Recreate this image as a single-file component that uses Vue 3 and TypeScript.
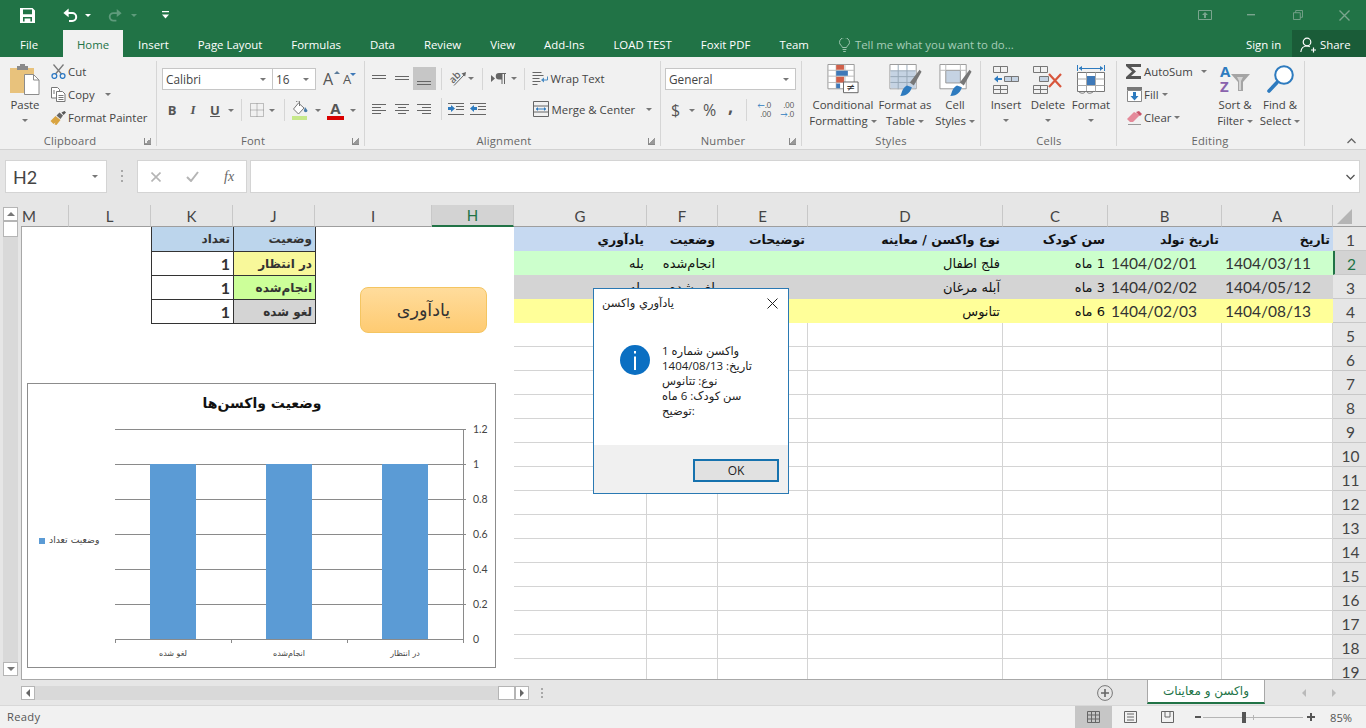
<script setup lang="ts">
const letters = ['M', 'L', 'K', 'J', 'I', 'H', 'G', 'F', 'E', 'D', 'C', 'B', 'A']
const content: Record<number, string[]> = {
  1: ['', '', 'تعداد', 'وضعیت', '', '', 'یادآوري', 'وضعیت', 'توضیحات', 'نوع واکسن / معاینه', 'سن کودک', 'تاریخ تولد', 'تاریخ'],
  2: ['', '', '1', 'در انتظار', '', '', 'بله', 'انجام‌شده', '', 'فلج اطفال', '1 ماه', '1404/02/01', '1404/03/11'],
  3: ['', '', '1', 'انجام‌شده', '', '', 'بله', 'لغو شده', '', 'آبله مرغان', '3 ماه', '1404/02/02', '1404/05/12'],
  4: ['', '', '1', 'لغو شده', '', '', 'بله', 'در انتظار', '', 'تتانوس', '6 ماه', '1404/02/03', '1404/08/13']
}
const rowNums = Array.from({ length: 19 }, (_, i) => i + 1)
const tabs = ['Insert', 'Page Layout', 'Formulas', 'Data', 'Review', 'View', 'Add-Ins', 'LOAD TEST', 'Foxit PDF', 'Team']

function cellText(r: number, c: number): string {
  return content[r]?.[c] ?? ''
}
function cellClass(r: number, c: number): string[] {
  const out: string[] = []
  if (c === 0) out.push('edge')
  if (c >= 6) {
    if (r === 1) out.push('head', 'f-blue')
    else if (r === 2) out.push('f-green')
    else if (r === 3) out.push('f-grey')
    else if (r === 4) out.push('f-yellow')
    else out.push('lined')
    if (r <= 4 && c >= 11 && r > 1) out.push('date')
    if (r > 1 && r <= 4) out.push('ar')
  }
  if ((c === 2 || c === 3) && r <= 4) {
    out.push('tbl')
    if (r === 1) out.push('t-blue', 'kh')
    if (c === 2 && r > 1) out.push('num')
    if (c === 3 && r === 2) out.push('t-yellow', 'kv')
    if (c === 3 && r === 3) out.push('t-lime', 'kv')
    if (c === 3 && r === 4) out.push('t-grey', 'kv')
  }
  return out
}
const gridY = [429, 464, 499, 534, 569, 604]
const axisLabels = ['1.2', '1', '0.8', '0.6', '0.4', '0.2', '0']
const bars = [150, 266, 382]
const cats = [
  { x: 173, t: 'لغو شده' },
  { x: 289, t: 'انجام‌شده' },
  { x: 405, t: 'در انتظار' }
]
const ticks = [115, 231, 347, 463]
</script>

<template>
  <div class="app">
    <header class="titlebar">
      <div class="qat">
        <svg class="q-save" width="15" height="15" viewBox="0 0 15 15"><path fill="#fff" fill-rule="evenodd" d="M0 0h12.5L15 2.500V15H0zM3 1.600v4.600h9V1.600zM3 9v4.400h1.600v-3h5.800v3H12V9z"/></svg>
        <svg class="q-undo" width="15" height="14" viewBox="0 0 15 14"><path fill="none" stroke="#fff" stroke-width="2" d="M2 5h7.200a4 4 0 0 1 0 8H6"/><path fill="#fff" d="M5.600 0.600v8.600L0.400 5z"/></svg>
        <i class="caret white c-undo"></i>
        <svg class="q-redo" width="14" height="14" viewBox="0 0 15 14"><path fill="none" stroke="#5f9b7c" stroke-width="2" d="M13 5H5.800a4 4 0 0 0 0 8H9"/><path fill="#5f9b7c" d="M9.400 0.600v8.600L14.600 5z"/></svg>
        <i class="caret dim c-redo"></i>
        <svg class="q-more" width="7" height="8" viewBox="0 0 7 8"><path fill="#fff" d="M0 0h7v1.300H0zM0 3.400h7L3.500 7.600z"/></svg>
        <div class="win">
          <svg width="14" height="10" viewBox="0 0 14 10"><path fill="none" stroke="#7aa58e" d="M.5.500h13v9H.5z"/><path fill="#7aa58e" d="M7 2l3 3H8v3H6V5H4z"/></svg>
          <svg class="w-min" width="8" height="2" viewBox="0 0 8 2"><path fill="#7aa58e" d="M0 0h8v1.400H0z"/></svg>
          <svg class="w-max" width="10" height="10" viewBox="0 0 11 11"><path fill="none" stroke="#7aa58e" d="M.5 3h7.500v7.500H.5zM3 3V.5h7.500V8H8"/></svg>
          <svg class="w-x" width="11" height="11" viewBox="0 0 11 11"><path stroke="#7aa58e" stroke-width="1.400" d="M.5.500l10 10M10.500.5l-10 10"/></svg>
        </div>
      </div>
      <nav class="tabs">
        <span class="tab file">File</span>
        <span class="tab home">Home</span>
        <span v-for="t in tabs" :key="t" class="tab">{{ t }}</span>
        <span class="tell">
          <svg width="11" height="14" viewBox="0 0 11 14"><path fill="none" stroke="#9cc4ae" d="M3.400 9.500C3 7.500.5 6.800.5 4.500a5 5 0 0 1 10 0c0 2.300-2.500 3-2.900 5zM3.600 11.500h3.800M4.200 13.500h2.600"/></svg>
          Tell me what you want to do...
        </span>
        <span class="signin">Sign in</span>
        <span class="share">
          <svg width="16" height="16" viewBox="0 0 16 16"><circle cx="7" cy="5" r="3.800" fill="none" stroke="#fff" stroke-width="1.200"/><path fill="none" stroke="#fff" stroke-width="1.200" d="M.8 15c.4-3.800 2.800-6 6.200-6 1 0 2 .2 2.800.6M11 13h5M13.500 10.500v5"/></svg>
          Share
        </span>
      </nav>
    </header>

    <section class="ribbon">
      <div class="group g-clip">
        <div class="body">
          <div class="big paste">
            <svg width="30" height="31" viewBox="0 0 30 31">
              <path fill="#e8c27c" d="M0 4h24v25H0z"/>
              <path fill="#8a8a8a" d="M7 2h3V0h5v2h3v4H7z"/>
              <path fill="#fff" stroke="#8c8c8c" d="M14.500 10.500h9l5.500 5.500v14.500H14.500z"/>
              <path fill="none" stroke="#8c8c8c" d="M23.500 10.500V16H29"/>
            </svg>
            <span class="lbl paste-l">Paste</span>
            <i class="caret"></i>
          </div>
          <div class="rows">
            <div class="row">
              <svg width="15" height="15" viewBox="0 0 15 15"><path fill="none" stroke="#7a7a7a" stroke-width="1.300" d="M2.500.5l8 9.500M12.500.5l-8 9.500"/><circle cx="3.400" cy="12" r="2.400" fill="none" stroke="#2b78c4" stroke-width="1.300"/><circle cx="11.600" cy="12" r="2.400" fill="none" stroke="#2b78c4" stroke-width="1.300"/></svg>
              <span>Cut</span>
            </div>
            <div class="row">
              <svg width="15" height="15" viewBox="0 0 15 15"><path fill="#fff" stroke="#777" d="M.5.500h6l2 2v8.500h-8z"/><path fill="#fff" stroke="#777" d="M5.500 4.500h6l2.500 2.500v7.500H5.500z"/><path stroke="#777" d="M7.500 8.500h5M7.500 10.500h5M7.500 12.500h5M2 4h2M2 6h2"/></svg>
              <span>Copy</span><i class="caret c-copy"></i>
            </div>
            <div class="row">
              <svg width="16" height="14" viewBox="0 0 16 14"><path fill="#d9a441" d="M0 10l5-5 5 4-4 5-2-.5 1-2-2 1.500z"/><path fill="#666" d="M6 4.500l3-3 3.500 3-2.500 3.500z"/><path fill="#555" d="M11 1.500l3-1.500 1.500 1.500-2.500 2.500z"/></svg>
              <span>Format Painter</span>
            </div>
          </div>
        </div>
        <div class="glabel"><span class="gl-t lt-clip">Clipboard</span><i class="launch"></i></div>
      </div>

      <div class="group g-font">
        <div class="body col">
          <div class="line l1">
            <span class="combo c-font">Calibri<i class="caret"></i></span>
            <span class="combo c-size">16<i class="caret"></i></span>
            <span class="grow">A<i class="up"></i></span>
            <span class="shrink">A<i class="down"></i></span>
          </div>
          <div class="line l2">
            <b class="fmt f-b">B</b>
            <i class="fmt f-i">I</i>
            <u class="fmt f-u">U</u>
            <i class="caret m-u"></i>
            <span class="sep s-f1"></span>
            <svg class="ic-border" width="14" height="14" viewBox="0 0 14 14"><path fill="none" stroke="#888" stroke-dasharray="1 1" d="M.5.500h13v13H.5zM7 .5v13M.5 7h13"/></svg>
            <i class="caret m-b"></i>
            <span class="sep s-f2"></span>
            <svg class="ic-fill" width="17" height="19" viewBox="0 0 17 19"><path fill="#fff" stroke="#777" d="M1.500 8l5-6 5.500 5-5.500 6z"/><path fill="none" stroke="#777" d="M4.500 1a1.500 1.500 0 0 1 3 0v4"/><path fill="#4a7ca8" d="M13 6l2.500 3.500a1.800 1.800 0 1 1-3.600 0z"/><path fill="#c6e88a" d="M0 15h15v4H0z"/></svg>
            <i class="caret m-f"></i>
            <span class="fcolor">A<em></em></span>
            <i class="caret m-c"></i>
          </div>
        </div>
        <div class="glabel"><span class="gl-t lt-font">Font</span><i class="launch"></i></div>
      </div>

      <div class="group g-align">
        <div class="body col">
          <div class="line a1">
            <span class="ib"><svg width="14" height="8" viewBox="0 0 14 8"><path stroke="#666" d="M0 .5h14M0 3.500h14"/></svg></span>
            <span class="ib"><svg width="14" height="8" viewBox="0 0 14 8"><path stroke="#666" d="M0 1.500h14M0 4.500h14"/></svg></span>
            <span class="ib on"><svg width="14" height="16" viewBox="0 0 14 16"><path stroke="#666" d="M0 10.500h14M0 13.500h14"/></svg></span>
            <span class="sep s-a1"></span>
            <svg class="ic-or" width="16" height="16" viewBox="0 0 16 16"><text x="0" y="10" transform="rotate(-45 5 8)" class="or-t">ab</text><path stroke="#666" d="M4 14.500L14 4"/><path fill="#666" d="M16 1l-.8 4.500L11.500 2.500z"/></svg>
            <i class="caret m-or"></i>
            <span class="sep s-a2"></span>
            <span class="rtl"><svg width="15" height="11" viewBox="0 0 15 11"><path fill="#666" d="M0 2l4 3.500L0 9zM8 0h7v1h-1v10h-1V1h-1.500v10h-1V6.500H8a3.200 3.200 0 0 1 0-6.500z"/></svg></span>
            <i class="caret m-rt"></i>
            <span class="sep s-a3"></span>
            <span class="wtxt">
              <svg width="16" height="16" viewBox="0 0 16 16"><path fill="none" stroke="#666" d="M.5 1.500h9M.5 4.500h11M.5 7.500h7M.5 10.500h8M.5 13.500h5"/><path fill="none" stroke="#4a8cc4" d="M15.500 5.500V9H11"/><path fill="#4a8cc4" d="M12 6.500v5L9 9z"/></svg>
              Wrap Text
            </span>
          </div>
          <div class="line a2">
            <span class="ib"><svg width="14" height="10" viewBox="0 0 14 10"><path stroke="#666" d="M0 .5h14M0 3.500h9M0 6.500h14M0 9.500h9"/></svg></span>
            <span class="ib"><svg width="14" height="10" viewBox="0 0 14 10"><path stroke="#666" d="M0 .5h14M3 3.500h8M0 6.500h14M3 9.500h8"/></svg></span>
            <span class="ib"><svg width="14" height="10" viewBox="0 0 14 10"><path stroke="#666" d="M0 .5h14M5 3.500h9M0 6.500h14M5 9.500h9"/></svg></span>
            <span class="sep s-a4"></span>
            <svg class="ic-ind" width="16" height="12" viewBox="0 0 16 12"><path stroke="#666" d="M0 .5h16M8 3.500h8M8 6.500h8M0 11.500h16"/><path fill="#2e7bbf" d="M0 4h3V2l4 3.500L3 9V7H0z"/></svg>
            <svg class="ic-out" width="16" height="12" viewBox="0 0 16 12"><path stroke="#666" d="M0 .5h16M8 3.500h8M8 6.500h8M0 11.500h16"/><path fill="#2e7bbf" d="M7 4H4V2L0 5.500 4 9V7h3z"/></svg>
            <span class="wtxt merge">
              <svg width="16" height="16" viewBox="0 0 16 16"><path fill="none" stroke="#666" d="M.5.500h15v15H.5zM.5 5h15M.5 11h15"/><path fill="none" stroke="#2e7bbf" d="M3 8h10"/><path fill="#2e7bbf" d="M3 8l2-2v4zM13 8l-2-2v4z"/></svg>
              Merge &amp; Center
            </span>
            <i class="caret m-mg"></i>
          </div>
        </div>
        <div class="glabel"><span class="gl-t lt-align">Alignment</span><i class="launch"></i></div>
      </div>

      <div class="group g-num">
        <div class="body col">
          <div class="line n1"><span class="combo c-num">General<i class="caret"></i></span></div>
          <div class="line n2">
            <span class="sym s-d">$</span><i class="caret m-d"></i>
            <span class="sym s-p">%</span>
            <span class="sym s-c">,</span>
            <span class="sep s-n"></span>
            <span class="dec d1"><em><b>←</b>.0</em><em>.00</em></span>
            <span class="dec d2"><em>.00</em><em><b>→</b>.0</em></span>
          </div>
        </div>
        <div class="glabel"><span class="gl-t lt-num">Number</span><i class="launch"></i></div>
      </div>

      <div class="group g-styles">
        <div class="body bigs">
          <div class="big w-cf">
            <svg width="32" height="36" viewBox="0 0 32 36">
              <path fill="#fff" stroke="#999" d="M.5.500h27v25H.5z"/>
              <path stroke="#bbb" d="M9 .5v25M18 .5v25M.5 6.500h27M.5 12.500h27M.5 19h27"/>
              <path fill="#d0604a" d="M9 1h8v5H9zM9 13h8v6H9z"/><path fill="#3f79b8" d="M9 7h12v5H9zM9 20h4v5H9z"/>
              <path fill="#fff" stroke="#666" d="M16.500 18.500h15v11h-15z"/>
              <text x="24" y="28" class="ne">≠</text>
            </svg>
            <span class="lbl">Conditional</span>
            <span class="lbl">Formatting<i class="caret c-in"></i></span>
          </div>
          <div class="big w-ft">
            <svg width="33" height="36" viewBox="0 0 33 36">
              <path fill="#fff" stroke="#999" d="M.5.500h27v25H.5z"/>
              <path fill="#c5d3e3" d="M1 7h26v18H1z"/>
              <path stroke="#98a8b8" d="M9 1v25M18 1v25M1 7h26M1 13h26M1 19h26"/>
              <path fill="#777" d="M21 19l10-13 2 2-8 14z"/>
              <path fill="#2e7bbf" d="M11 33c2-2 1-8 7-11l5 2c-1 4-4 9-12 9z"/>
            </svg>
            <span class="lbl">Format as</span>
            <span class="lbl">Table<i class="caret c-in"></i></span>
          </div>
          <div class="big w-cs">
            <svg width="33" height="36" viewBox="0 0 33 36">
              <path fill="#fff" stroke="#999" d="M.5.500h27v25H.5z"/>
              <path fill="#c5d3e3" stroke="#999" d="M6.500 6.500h15v13h-15z"/>
              <path stroke="#bbb" d="M.5 6.500h6M21.500 6.500h6M6.500 .5v6M21.500 .5v6"/>
              <path fill="#777" d="M21 19l10-13 2 2-8 14z"/>
              <path fill="#2e7bbf" d="M11 33c2-2 1-8 7-11l5 2c-1 4-4 9-12 9z"/>
            </svg>
            <span class="lbl">Cell</span>
            <span class="lbl">Styles<i class="caret c-in"></i></span>
          </div>
        </div>
        <div class="glabel"><span class="gl-t lt-styles">Styles</span></div>
      </div>

      <div class="group g-cells">
        <div class="body bigs">
          <div class="big w-in">
            <svg width="26" height="28" viewBox="0 0 26 28">
              <path fill="none" stroke="#777" d="M.5.500h14v6H.5zM7.500.5v6M.5 19.500h14v8H.5zM7.500 19.500v8M.5 23.500h14"/>
              <path fill="#c5d3e3" stroke="#777" d="M11.500 10.500h14v5h-14zM18.500 10.500v5"/>
              <path fill="#2e7bbf" d="M1 13l4-3.500V12h4v2H5v2.500z"/>
            </svg>
            <span class="lbl">Insert</span><i class="caret"></i>
          </div>
          <div class="big w-del">
            <svg width="30" height="28" viewBox="0 0 30 28">
              <path fill="none" stroke="#777" d="M.5.500h14v6H.5zM7.500.5v6M.5 19.500h14v8H.5zM7.500 19.500v8M.5 23.500h14"/>
              <path fill="#c5d3e3" stroke="#777" d="M6.500 10.500h9v5h-9z"/>
              <path stroke="#d8563c" stroke-width="2.200" d="M16 8l12 13M28 8L16 21"/>
            </svg>
            <span class="lbl">Delete</span><i class="caret"></i>
          </div>
          <div class="big w-fmt">
            <svg width="28" height="30" viewBox="0 0 28 30">
              <path fill="#2e7bbf" d="M0 0h1v6H0zM27 0h1v6h-1zM2 3h24v1H2z"/>
              <path fill="#2e7bbf" d="M2 3l3-2v5zM26 3l-3-2v5z"/>
              <path fill="#fff" stroke="#777" d="M.5 7.500h27v19H.5z"/>
              <path stroke="#aaa" d="M9.500 7.500v19M18.500 7.500v19M.5 14h27M.5 20.500h27"/>
              <path fill="#3f79b8" d="M10 11h8v9h-8z"/>
              <path fill="none" stroke="#777" d="M1 26c3 3 6 3 8 0 2 3 5 3 8 0"/>
            </svg>
            <span class="lbl">Format</span><i class="caret"></i>
          </div>
        </div>
        <div class="glabel"><span class="gl-t lt-cells">Cells</span></div>
      </div>

      <div class="group g-edit">
        <div class="body">
          <div class="rows e-rows">
            <div class="row">
              <svg width="17" height="15" viewBox="0 0 17 15"><path fill="#555" d="M0 0h15v3H5l5 4.500L5 12h10v3H0v-2l6-5.500L0 2z"/></svg>
              <span>AutoSum</span><i class="caret c-as"></i>
            </div>
            <div class="row">
              <svg width="15" height="15" viewBox="0 0 15 15"><path fill="#777" d="M0 0h15v3H0z"/><path fill="#fff" stroke="#888" d="M.5 3.500h14v11H.5z"/><path fill="#2e7bbf" d="M6 5h3v4h2.500l-4 4.500L3.500 9H6z"/></svg>
              <span>Fill</span><i class="caret c-fl"></i>
            </div>
            <div class="row">
              <svg width="15" height="14" viewBox="0 0 15 14"><path fill="#e58a9a" d="M0 8l7-7 6 3-7 7H3z"/><path fill="#c9566a" d="M9 1l3-1 3 3-2 2z"/><path stroke="#999" d="M1 13.500h13"/></svg>
              <span>Clear</span><i class="caret c-fl"></i>
            </div>
          </div>
          <div class="big w-sort">
            <svg width="32" height="28" viewBox="0 0 32 28">
              <text x="1" y="12" class="az a">A</text>
              <text x="1" y="27" class="az z">Z</text>
              <path fill="#a5a5a5" d="M12 9h19l-7 8v9h-5v-9z"/>
              <path fill="#d4d4d4" d="M18 12h6l-2 4v9h-2v-9z"/>
            </svg>
            <span class="lbl">Sort &amp;</span>
            <span class="lbl">Filter<i class="caret c-in"></i></span>
          </div>
          <div class="big w-find">
            <svg width="28" height="28" viewBox="0 0 28 28">
              <circle cx="18" cy="10" r="8.800" fill="#fff" stroke="#2e7bbf" stroke-width="2"/>
              <path stroke="#2e7bbf" stroke-width="3.600" stroke-linecap="round" d="M11 17.500l-8 8.500"/>
            </svg>
            <span class="lbl">Find &amp;</span>
            <span class="lbl">Select<i class="caret c-in"></i></span>
          </div>
        </div>
        <div class="glabel"><span class="gl-t lt-edit">Editing</span></div>
      </div>

      <div class="collapse">
        <svg width="9" height="6" viewBox="0 0 9 6"><path fill="none" stroke="#666" stroke-width="1.300" d="M.5 5l4-4 4 4"/></svg>
      </div>
    </section>

    <section class="fbar">
      <div class="namebox">H2<i class="caret"></i></div>
      <div class="dots"><i></i><i></i><i></i></div>
      <div class="fnbox">
        <svg width="10" height="10" viewBox="0 0 10 10"><path stroke="#b5b5b5" stroke-width="1.600" d="M.5.500l9 9M9.500.5l-9 9"/></svg>
        <svg width="13" height="11" viewBox="0 0 13 11"><path fill="none" stroke="#b5b5b5" stroke-width="2" d="M1 6l4 4 7-9"/></svg>
        <em>fx</em>
      </div>
      <div class="finput">
        <svg width="9" height="6" viewBox="0 0 9 6"><path fill="none" stroke="#555" stroke-width="1.300" d="M.5 1l4 4 4-4"/></svg>
      </div>
    </section>

    <section class="sheet">
      <div class="vscroll">
        <span class="vbtn"><i class="tri-up"></i></span>
        <span class="vthumb"></span>
        <span class="vtrack"></span>
        <span class="vbtn"><i class="tri-down"></i></span>
      </div>
      <div class="gridwrap">
        <div class="grid">
          <div v-for="l in letters" :key="l" class="ch" :class="{ sel: l === 'H', first: l === 'M' }">{{ l }}</div>
          <div class="corner"><i></i></div>
          <template v-for="r in rowNums" :key="r">
            <div v-for="(l, c) in letters" :key="l + r" class="cell" :class="cellClass(r, c)" dir="rtl">{{ cellText(r, c) }}</div>
            <div class="rh" :class="{ sel: r === 2 }">{{ r }}</div>
          </template>
        </div>

        <button class="remind" type="button">یادآوری</button>

        <svg class="chart" width="469" height="285" viewBox="27 383 469 285">
          <rect x="27.500" y="383.500" width="468" height="284" fill="#fff" stroke="#8c8c8c"/>
          <text x="262" y="408" class="c-title" text-anchor="middle">وضعیت واکسن‌ها</text>
          <path v-for="y in gridY" :key="y" :d="`M115 ${y + 0.5}H466`" stroke="#8a8a8a"/>
          <path d="M115 639.500H463M463.500 429V639" stroke="#8a8a8a"/>
          <path v-for="x in ticks" :key="x" :d="`M${x + 0.5} 639V643`" stroke="#8a8a8a"/>
          <rect v-for="x in bars" :key="x" :x="x" y="464" width="46" height="175" fill="#5b9bd5"/>
          <text v-for="(a, i) in axisLabels" :key="a" x="473" :y="433 + i * 35" class="c-axis">{{ a }}</text>
          <text v-for="k in cats" :key="k.x" :x="k.x" y="656" class="c-cat" text-anchor="middle">{{ k.t }}</text>
          <rect x="39" y="538" width="6" height="6" fill="#5b9bd5"/>
          <text x="49" y="543" class="c-leg">وضعیت تعداد</text>
        </svg>

        <div class="dialog">
          <div class="d-title">
            <span dir="rtl">يادآوري واکسن</span>
            <svg width="11" height="11" viewBox="0 0 11 11"><path stroke="#222" d="M.5.500l10 10M10.500.5l-10 10"/></svg>
          </div>
          <div class="d-body">
            <svg width="30" height="30" viewBox="0 0 30 30"><circle cx="15" cy="15" r="15" fill="#0b6fc2"/><path fill="#fff" d="M14 11.500h2V25h-2zM14 6h2v2.500h-2z"/></svg>
            <div class="d-msg">
              <div>واکسن شماره 1</div>
              <div>تاریخ: 1404/08/13</div>
              <div>نوع: تتانوس</div>
              <div>سن کودک: 6 ماه</div>
              <div>توضیح:</div>
            </div>
          </div>
          <div class="d-foot"><button class="ok" type="button">OK</button></div>
        </div>
      </div>
    </section>

    <section class="bottom">
      <span class="sb-btn"><i class="tri-left"></i></span>
      <span class="htrack"></span>
      <span class="hthumb"></span>
      <span class="sb-btn"><i class="tri-right"></i></span>
      <span class="dots h"><i></i><i></i><i></i></span>
      <svg class="plus" width="16" height="16" viewBox="0 0 16 16"><circle cx="8" cy="8" r="7.400" fill="none" stroke="#777"/><path stroke="#666" stroke-width="1.600" d="M8 4v8M4 8h8"/></svg>
      <span class="stab">واکسن و معاینات</span>
      <i class="tri-left dim1"></i>
      <i class="tri-right dim2"></i>
    </section>

    <footer class="status">
      <span class="ready">Ready</span>
      <span class="view on">
        <svg width="13" height="12" viewBox="0 0 13 12"><path fill="none" stroke="#666" d="M.5.500h12v11H.5zM4.500.5v11M8.500.5v11M.5 4h12M.5 8h12"/></svg>
      </span>
      <span class="view">
        <svg width="13" height="12" viewBox="0 0 13 12"><path fill="none" stroke="#666" d="M.5.500h12v11H.5zM3 3h7M3 6h7M3 9h7"/></svg>
      </span>
      <span class="view">
        <svg width="13" height="12" viewBox="0 0 13 12"><path fill="none" stroke="#666" d="M.5 11.500V.5h12v11M4 .5V6h5V.5M.5 11.500h12"/></svg>
      </span>
      <span class="zm-minus"></span>
      <span class="slider"><i class="tick"></i><i class="thumb"></i></span>
      <span class="zm-plus"></span>
      <span class="pct">85%</span>
    </footer>
  </div>
</template>

<style>
html, body { margin: 0; padding: 0; background: #e6e6e6; overflow: hidden; }
</style>

<style scoped>
.app { width: 1366px; height: 728px; overflow: hidden; display: flex; flex-direction: column; font-family: "Open Sans", "DejaVu Sans", sans-serif; color: #444; background: #e6e6e6; }
.caret { display: inline-block; width: 0; height: 0; border-left: 3px solid transparent; border-right: 3px solid transparent; border-top: 3px solid #777; font-style: normal; }
.caret.white { border-top-color: #fff; }
.caret.dim { border-top-color: #5f9b7c; }

.titlebar { height: 57px; background: #217346; display: flex; flex-direction: column; color: #fff; }
.qat { height: 30px; display: flex; align-items: center; padding-left: 20px; }
.q-undo { margin-left: 28px; }
.c-undo { margin-left: 7px; }
.q-redo { margin-left: 17px; }
.c-redo { margin-left: 9px; }
.q-more { margin-left: 25px; }
.win { margin-left: auto; display: flex; align-items: center; width: 168px; }
.w-min { margin-left: 35px; }
.w-max { margin-left: 38px; }
.w-x { margin-left: 36px; }
.tabs { height: 27px; display: flex; align-items: stretch; font-size: 11.400px; }
.tab { display: flex; align-items: center; padding-top: 2px; padding-right: 29px; box-sizing: border-box; white-space: nowrap; }
.tab.file { padding-left: 20px; padding-right: 25px; }
.tab.home { background: #f1f1f1; color: #217346; margin-right: 15px; padding-left: 14px; padding-right: 14px; width: 60px; justify-content: center; }
.tell { display: flex; align-items: center; gap: 5px; color: #a6cdb8; padding-left: 1px; padding-top: 2px; white-space: nowrap; }
.signin { display: flex; align-items: center; padding-top: 2px; width: 46px; margin-left: auto; }
.share { display: flex; align-items: center; gap: 4px; background: #1a5c38; width: 74px; box-sizing: border-box; padding-left: 8px; padding-top: 2px; }

.ribbon { height: 93px; box-sizing: border-box; background: #f1f1f1; border-bottom: 1px solid #d2d2d2; display: flex; font-size: 11.400px; color: #444; }
.group { display: flex; flex-direction: column; position: relative; box-sizing: border-box; }
.group::after { content: ""; position: absolute; right: 0; top: 4px; bottom: 3px; width: 1px; background: #d6d6d6; }
.body { height: 76px; display: flex; box-sizing: border-box; }
.col { flex-direction: column; }
.glabel { height: 14px; display: flex; align-items: center; position: relative; color: #666; font-size: 11.200px; letter-spacing: .2px; }
.gl-t { position: absolute; transform: translateX(-50%); white-space: nowrap; }
.launch { position: absolute; right: 6px; top: 5px; width: 6px; height: 6px; border-left: 1px solid #888; border-bottom: 1px solid #888; background: linear-gradient(135deg, transparent 50%, #999 50%); }
.lt-clip { left: 70px; }
.lt-font { left: 96px; }
.lt-align { left: 139px; }
.lt-num { left: 62px; }
.lt-styles { left: 89px; }
.lt-cells { left: 68px; }
.lt-edit { left: 93px; }
.g-clip { width: 157px; }
.g-font { width: 208px; }
.g-align { width: 296px; }
.g-num { width: 141px; }
.g-styles { width: 179px; }
.g-cells { width: 136px; }
.g-edit { width: 188px; }

.big { display: flex; flex-direction: column; align-items: center; padding-top: 7px; box-sizing: border-box; }
.big svg { flex: none; height: 35px; margin-bottom: -2px; }
.lbl { line-height: 16px; height: 16px; white-space: nowrap; display: block; }
.big > .caret { margin-top: 6px; }
.c-in { margin-left: 3px; vertical-align: 2px; }
.paste { width: 34px; margin-left: 8px; }
.paste svg { height: 31px; margin-bottom: 2px; }
.rows { display: flex; flex-direction: column; margin-left: 7px; padding-top: 3px; }
.row { height: 23px; display: flex; align-items: center; white-space: nowrap; }
.row svg { width: 19px; flex: none; }
.c-copy { margin-left: 10px; }

.line { display: flex; align-items: center; }
.l1 { margin-top: 11px; margin-left: 5px; height: 22px; }
.l2 { margin-top: 9px; height: 22px; margin-left: 5px; }
.combo { height: 22px; box-sizing: border-box; background: #fff; border: 1px solid #c6c6c6; display: flex; align-items: center; justify-content: space-between; padding: 0 6px 0 3px; font-size: 11.800px; }
.c-font { width: 111px; }
.c-size { width: 43px; border-left: 0; }
.grow { margin-left: 7px; width: 20px; font-size: 16px; position: relative; color: #555; }
.shrink { font-size: 13px; width: 16px; position: relative; color: #555; }
.up, .down { position: absolute; right: 3px; top: 3px; border-left: 3px solid transparent; border-right: 3px solid transparent; }
.up { border-bottom: 3px solid #5b7b9a; }
.down { border-top: 3px solid #3f79b8; }
.fmt { font-size: 13px; color: #555; width: 20px; text-align: center; display: block; font-style: normal; font-weight: 700; font-family: "Open Sans", sans-serif; }
.f-i { font-style: italic; font-family: "Liberation Serif", serif; margin-left: 1px; }
.f-u { margin-left: 2px; }
.m-u { margin-left: 3px; }
.sep { display: block; width: 1px; height: 22px; background: #d6d6d6; flex: none; }
.s-f1 { margin-left: 7px; }
.ic-border { margin-left: 8px; }
.m-b { margin-left: 5px; }
.s-f2 { margin-left: 9px; }
.ic-fill { margin-left: 7px; }
.m-f { margin-left: 6px; }
.fcolor { margin-left: 6px; width: 17px; font-weight: 700; font-size: 15px; text-align: center; position: relative; line-height: 16px; color: #555; padding-bottom: 4px; }
.fcolor em { position: absolute; left: 0; right: 0; bottom: 0; height: 4px; background: #d90000; }
.m-c { margin-left: 6px; }

.a1 { margin-top: 10px; height: 23px; margin-left: 3px; }
.a2 { margin-top: 8px; height: 22px; margin-left: 3px; }
.ib { width: 22.500px; height: 23px; display: flex; align-items: center; justify-content: center; flex: none; box-sizing: border-box; }
.ib.on { background: #c6c6c6; }
.s-a1 { margin-left: 5px; }
.ic-or { margin-left: 8px; overflow: visible; }
.or-t { font-size: 10px; font-family: "Open Sans", sans-serif; fill: #666; font-weight: 600; }
.m-or { margin-left: 2px; }
.s-a2 { margin-left: 8px; }
.rtl { margin-left: 8px; display: flex; }
.m-rt { margin-left: 5px; }
.s-a3 { margin-left: 7px; }
.wtxt { display: flex; align-items: center; gap: 3px; margin-left: 7px; white-space: nowrap; }
.s-a4 { margin-left: 5px; }
.ic-ind { margin-left: 6px; }
.ic-out { margin-left: 6px; }
.merge { margin-left: 47px; }
.m-mg { margin-left: 11px; }

.n1 { margin-top: 11px; margin-left: 4px; }
.c-num { width: 131px; padding-left: 3px; }
.n2 { margin-top: 9px; height: 22px; }
.sym { color: #555; display: block; }
.s-d { font-size: 16px; margin-left: 10px; width: 10px; }
.m-d { margin-left: 8px; }
.s-p { font-size: 16px; margin-left: 8px; width: 16px; }
.s-c { font-size: 18px; font-weight: 700; margin-left: 9px; width: 6px; line-height: 18px; padding-bottom: 8px; }
.s-n { margin-left: 12px; }
.dec { display: flex; flex-direction: column; font-family: "Lato", sans-serif; font-size: 7.500px; line-height: 9px; width: 17px; margin-left: 7px; text-align: right; color: #555; }
.dec em { font-style: normal; white-space: nowrap; }
.dec b { color: #2e7bbf; font-weight: 400; }
.d2 { margin-left: 6px; }

.bigs { padding-left: 8px; }
.w-cf { width: 66px; }
.w-ft { width: 56px; margin-left: 1px; }
.w-cs { width: 42px; margin-left: 1px; }
.ne { font-size: 11px; text-anchor: middle; fill: #333; font-family: "DejaVu Sans", sans-serif; }
.g-cells .bigs { padding-left: 7px; }
.w-in { width: 36px; }
.w-del { width: 40px; margin-left: 4px; }
.w-fmt { width: 42px; margin-left: 2px; }
.w-in svg, .w-del svg, .w-fmt svg { height: 32px; margin-bottom: 1px; }
.e-rows { margin-left: 8px; width: 90px; flex: none; }
.c-as { margin-left: 8px; }
.c-fl { margin-left: 3px; }
.w-sort { width: 40px; }
.w-sort svg, .w-find svg { height: 28px; margin-top: 1px; margin-bottom: 4px; overflow: visible; }
.w-find { width: 44px; margin-left: 3px; }
.az { font-size: 15px; font-weight: 700; font-family: "Open Sans", sans-serif; }
.az.a { fill: #2e7bbf; }
.az.z { fill: #8a63ad; }
.collapse { flex: 1; display: flex; justify-content: flex-end; align-items: flex-end; padding: 0 10px 5px 0; }

.fbar { height: 55px; display: flex; align-items: flex-start; background: #e6e6e6; padding-top: 10px; box-sizing: border-box; }
.namebox { width: 102px; height: 33px; box-sizing: border-box; margin-left: 5px; background: #fff; border: 1px solid #d4d4d4; display: flex; align-items: center; justify-content: space-between; padding: 0 8px 0 7px; font-family: "Lato", sans-serif; font-size: 18px; color: #444; }
.dots { display: flex; flex-direction: column; gap: 3px; margin: 10px 14px 0 14px; }
.dots i { width: 2px; height: 2px; background: #a8a8a8; display: block; }
.fnbox { width: 110px; height: 33px; box-sizing: border-box; background: #fff; border: 1px solid #d4d4d4; display: flex; align-items: center; padding-left: 13px; }
.fnbox svg:nth-child(2) { margin-left: 25px; }
.fnbox em { margin-left: 25px; font-family: "Liberation Serif", serif; font-size: 14px; color: #666; }
.finput { margin-left: 3px; width: 1110px; height: 33px; box-sizing: border-box; background: #fff; border: 1px solid #d4d4d4; display: flex; align-items: center; justify-content: flex-end; padding-right: 4px; }

.sheet { height: 474px; display: flex; background: #e6e6e6; }
.vscroll { width: 21px; flex: none; display: flex; flex-direction: column; box-sizing: border-box; padding: 2px 3px 3px 3px; background: #e6e6e6; }
.vbtn { width: 15px; height: 14px; background: #fff; border: 1px solid #b5b5b5; box-sizing: border-box; display: flex; align-items: center; justify-content: center; flex: none; }
.vthumb { width: 15px; height: 16px; background: #fff; border: 1px solid #b5b5b5; box-sizing: border-box; flex: none; }
.vtrack { flex: 1; background: #d9d9d9; width: 15px; }
.tri-up { border-left: 4px solid transparent; border-right: 4px solid transparent; border-bottom: 4px solid #777; }
.tri-down { border-left: 4px solid transparent; border-right: 4px solid transparent; border-top: 4px solid #777; }
.gridwrap { flex: 1; position: relative; overflow: hidden; background: #fff; }
.grid { display: grid; grid-template-columns: 48px 82px 82px 82px 117px 82px 133px 71px 90px 195px 105px 114px 111px 33px; grid-template-rows: 22px repeat(19, 24px); }
.ch { background: #e6e6e6; border-right: 1px solid #c8c8c8; border-bottom: 1px solid #9e9e9e; box-sizing: border-box; font-family: "Lato", sans-serif; font-size: 15px; color: #444; display: flex; align-items: center; justify-content: center; }
.ch.first { justify-content: flex-start; padding-left: 1px; }
.ch.sel { background: #d3d3d3; color: #217346; border-bottom: 2px solid #217346; }
.corner { background: #e6e6e6; border-bottom: 1px solid #9e9e9e; box-sizing: border-box; position: relative; }
.corner i { position: absolute; right: 14px; bottom: 2px; border-bottom: 15px solid #b5b5b5; border-left: 15px solid transparent; }
.rh { background: #e6e6e6; border-bottom: 1px solid #c8c8c8; box-sizing: border-box; font-family: "Lato", sans-serif; font-size: 15.500px; color: #444; display: flex; align-items: center; justify-content: center; padding: 2px 0 0 2px; }
.rh.sel { background: #d3d3d3; color: #217346; border-left: 2px solid #217346; }
.cell { box-sizing: border-box; overflow: hidden; white-space: nowrap; font-family: "DejaVu Sans", sans-serif; display: flex; align-items: center; font-size: 13px; color: #111; padding: 0 3px; background: #fff; }
.edge { border-left: 1px solid #a8a8a8; }
.lined { border-right: 1px solid #d4d4d4; border-bottom: 1px solid #d4d4d4; }
.head { font-weight: 700; font-size: 12.500px; }
.f-blue { background: #c6d9f1; }
.f-green { background: #ccffcc; }
.f-grey { background: #d4d4d4; }
.f-yellow { background: #ffff99; }
.date { font-family: "Lato", sans-serif; font-size: 15.500px; direction: ltr; color: #333; justify-content: flex-start; }
.tbl { border: 1px solid #333; margin: 0 -1px -1px 0; position: relative; z-index: 1; }
.t-blue { background: #bcd5ec; border-top: 0; }
.t-yellow { background: #f8f89a; }
.t-lime { background: #ccff99; }
.t-grey { background: #d4d4d4; }
.kh, .kv { font-weight: 700; font-size: 12px; color: #333; }
.num { font-family: "Lato", sans-serif; font-weight: 700; font-size: 16px; color: #333; direction: ltr; justify-content: flex-end; }

.remind { position: absolute; left: 339px; top: 82px; width: 127px; height: 46px; box-sizing: border-box; border: 1px solid #f4c561; border-radius: 8px; background: linear-gradient(#ffdc9c, #fecb72); font-family: "DejaVu Sans", sans-serif; font-size: 17.500px; color: #333; padding: 0; z-index: 2; }
.chart { position: absolute; left: 6px; top: 178px; z-index: 2; }
.c-title { font-family: "DejaVu Sans", sans-serif; font-weight: 700; font-size: 14px; fill: #111; }
.c-axis { font-family: "Lato", sans-serif; font-size: 10.500px; fill: #444; }
.c-cat { font-family: "DejaVu Sans", sans-serif; font-size: 8px; fill: #444; }
.c-leg { font-family: "DejaVu Sans", sans-serif; font-size: 9.300px; fill: #444; }

.dialog { position: absolute; left: 572px; top: 83px; width: 196px; height: 206px; box-sizing: border-box; background: #fff; border: 1px solid #2a79b3; display: flex; flex-direction: column; font-family: "DejaVu Sans", sans-serif; color: #222; z-index: 3; }
.d-title { height: 28px; display: flex; align-items: center; justify-content: space-between; padding: 0 10px 0 8px; font-size: 11.500px; box-sizing: border-box; }
.d-body { flex: 1; display: flex; align-items: flex-start; padding: 28px 0 0 26px; box-sizing: border-box; }
.d-msg { margin-left: 12px; font-family: "Open Sans", "DejaVu Sans", sans-serif; font-size: 11.500px; line-height: 14.900px; margin-top: -1px; white-space: nowrap; }
.d-foot { height: 48px; background: #f0f0f0; display: flex; justify-content: flex-end; padding: 14px 9px 0 0; box-sizing: border-box; }
.ok { width: 86px; height: 23px; box-sizing: border-box; background: #e1e1e1; border: 2px solid #1672ae; font-family: "Open Sans", sans-serif; font-size: 12px; color: #222; padding: 0; }

.bottom { height: 26px; display: flex; align-items: flex-start; background: #e6e6e6; box-sizing: border-box; border-top: 1px solid #a8a8a8; margin-left: 21px; position: relative; padding-top: 6px; }
.sb-btn { width: 14px; height: 14px; background: #fff; border: 1px solid #b5b5b5; box-sizing: border-box; display: flex; align-items: center; justify-content: center; flex: none; }
.tri-left { border-top: 4px solid transparent; border-bottom: 4px solid transparent; border-right: 4px solid #666; display: block; }
.tri-right { border-top: 4px solid transparent; border-bottom: 4px solid transparent; border-left: 4px solid #666; display: block; }
.htrack { width: 463px; height: 14px; background: #d9d9d9; flex: none; }
.hthumb { width: 17px; height: 14px; background: #fff; border: 1px solid #b5b5b5; box-sizing: border-box; flex: none; }
.dots.h { margin: 2px 0 0 12px; gap: 2px; }
.plus { margin-left: 554px; margin-top: -1px; }
.stab { margin-left: 34px; margin-top: -6px; width: 118px; height: 24px; box-sizing: border-box; background: #fff; border-bottom: 2px solid #217346; border-left: 1px solid #a8a8a8; border-right: 1px solid #a8a8a8; display: flex; align-items: center; justify-content: center; font-family: "DejaVu Sans", sans-serif; font-size: 12px; color: #217346; }
.dim1, .dim2 { opacity: .35; margin-top: 3px; }
.dim1 { margin-left: 37px; }
.dim2 { margin-left: 26px; }

.status { height: 23px; background: #f1f1f1; display: flex; align-items: center; font-size: 11.200px; color: #555; border-top: 1px solid #d8d8d8; box-sizing: border-box; position: relative; }
.ready { margin-left: 7px; width: 1068px; letter-spacing: .3px; padding-bottom: 2px; }
.view { width: 37px; height: 22px; display: flex; align-items: center; justify-content: center; }
.view.on { background: #c6c6c6; }
.zm-minus { margin-left: 9px; width: 6px; height: 2px; background: #555; }
.slider { margin-left: 2px; width: 100px; height: 1px; background: #b5b5b5; position: relative; }
.slider .tick { position: absolute; left: 50px; top: -2px; width: 1px; height: 5px; background: #b5b5b5; }
.slider .thumb { position: absolute; left: 39px; top: -5px; width: 4px; height: 11px; background: #555; }
.zm-plus { margin-left: 4px; width: 8px; height: 8px; background: linear-gradient(#555,#555) center/8px 2px no-repeat, linear-gradient(#555,#555) center/2px 8px no-repeat; }
.pct { margin-left: 15px; }
</style>
